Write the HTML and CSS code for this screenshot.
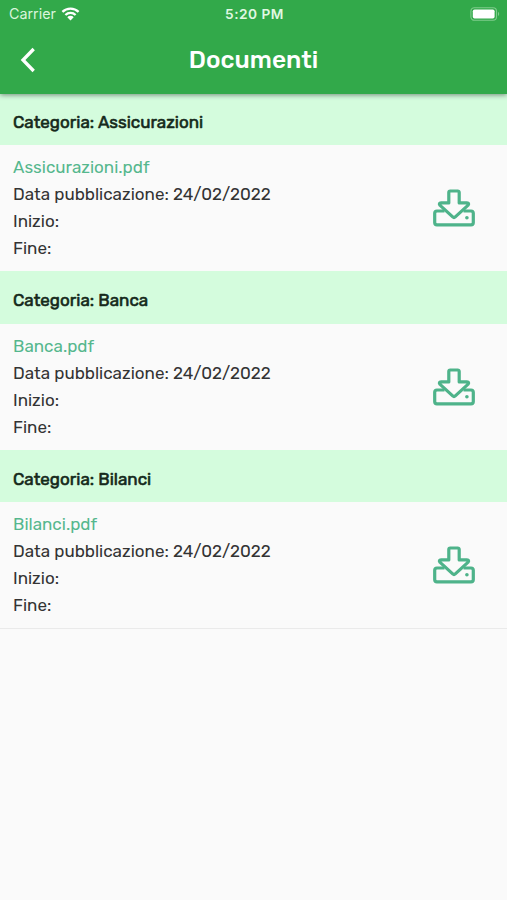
FILE: index.html
```
<!DOCTYPE html>
<html lang="it">
<head>
<meta charset="utf-8">
<meta name="viewport" content="width=device-width, initial-scale=1">
<title>Documenti</title>
<link rel="stylesheet" href="styles.css">
</head>
<body>
<svg class="defs" width="0" height="0" aria-hidden="true">
  <symbol id="download" viewBox="0 0 42 38">
    <path d="M11.500 22H4A2.300 2.300 0 0 0 1.700 24.300v9.300A2.300 2.300 0 0 0 4 35.900h34a2.300 2.300 0 0 0 2.300-2.300v-9.300a2.300 2.300 0 0 0-2.300-2.300h-7.500" fill="none" stroke="currentColor" stroke-width="3.200"/>
    <path d="M17.300 2h7.400a1.500 1.500 0 0 1 1.500 1.500v10.400h7.600q3 .3 1.100 2.500L22.300 27.900q-1.300 1.200-2.600 0L7.100 16.400q-1.900-2.200 1.100-2.500h7.600V3.500a1.500 1.500 0 0 1 1.500-1.500z" fill="none" stroke="currentColor" stroke-width="3.200" stroke-linejoin="round"/>
    <circle cx="33.900" cy="28.800" r="1.800" fill="currentColor"/>
  </symbol>
</svg>
<header class="header">
  <div class="status">
    <div class="carrier"><span>Carrier</span>
      <svg class="wifi" viewBox="0 0 18 14" aria-hidden="true">
        <path d="M.9 4.900a11.500 11.500 0 0 1 16.200 0M3.900 8a7.300 7.300 0 0 1 10.200 0" fill="none" stroke="#fff" stroke-width="2.300"/>
        <path d="M5.800 10.200a4.500 4.500 0 0 1 6.400 0L9 13.400z" fill="#fff"/>
      </svg>
    </div>
    <span class="clock">5:20 PM</span>
    <svg class="battery" viewBox="0 0 30 14" aria-hidden="true">
      <rect x=".9" y=".7" width="25.600" height="12.600" rx="3.500" fill="none" stroke="#7fcb8c" stroke-width="1.100"/>
      <rect x="2.800" y="2.500" width="21.800" height="9" rx="1.800" fill="#fff"/>
      <path d="M28 4.800q2.400 2.200 0 4.400z" fill="#7fcb8c"/>
    </svg>
  </div>
  <div class="toolbar">
    <svg class="back" viewBox="0 0 16 26" aria-hidden="true"><path d="M13.700 2 3 13l10.700 11" fill="none" stroke="#fff" stroke-width="3.300"/></svg>
    <h1 class="title">Documenti</h1>
  </div>
</header>
<main>
  <section class="group">
    <h2 class="category">Categoria: Assicurazioni</h2>
    <div class="document">
      <div class="details">
        <div class="file">Assicurazioni.pdf</div>
        <div>Data pubblicazione: 24/02/2022</div>
        <div>Inizio:</div>
        <div>Fine:</div>
      </div>
      <svg class="download"><use href="#download"/></svg>
    </div>
  </section>
  <section class="group">
    <h2 class="category">Categoria: Banca</h2>
    <div class="document">
      <div class="details">
        <div class="file">Banca.pdf</div>
        <div>Data pubblicazione: 24/02/2022</div>
        <div>Inizio:</div>
        <div>Fine:</div>
      </div>
      <svg class="download"><use href="#download"/></svg>
    </div>
  </section>
  <section class="group">
    <h2 class="category">Categoria: Bilanci</h2>
    <div class="document">
      <div class="details">
        <div class="file">Bilanci.pdf</div>
        <div>Data pubblicazione: 24/02/2022</div>
        <div>Inizio:</div>
        <div>Fine:</div>
      </div>
      <svg class="download"><use href="#download"/></svg>
    </div>
  </section>
</main>
</body>
</html>
```
FILE: styles.css
```
* { box-sizing: border-box; }
body {
  margin: 0;
  min-height: 900px;
  background: #fafafa;
  color: #333;
  font-family: Rubik, Roboto, sans-serif;
}
.defs { display: block; }
.header {
  position: relative;
  height: 94px;
  margin-bottom: -1.100px;
  background: #32a94a;
  color: #fff;
  box-shadow: 0 1px 5px rgba(0, 0, 0, .45);
}
.status {
  display: grid;
  grid-template-columns: 1fr auto 1fr;
  align-items: center;
  height: 27px;
  padding: 0 7px 0 9px;
}
.carrier {
  display: flex;
  align-items: center;
  gap: 5px;
  font: 400 14.300px Inter, sans-serif;
  color: #d9f5dc;
}
.wifi { width: 19px; height: 14px; }
.clock {
  font: 600 13.700px Inter, sans-serif;
  letter-spacing: .5px;
  color: #e0f8e3;
}
.battery { width: 30px; height: 14px; justify-self: end; }
.toolbar {
  display: grid;
  grid-template-columns: 1fr auto 1fr;
  align-items: center;
  height: 66px;
  padding: 0 20px;
}
.back { width: 16px; height: 26px; }
.title {
  margin: -1px 0 0;
  font-size: 24.500px;
  font-weight: 500;
}
.category {
  height: 52.200px;
  margin: 0;
  padding: 6px 13px 0;
  background: #d4fcdd;
  color: #15291b;
  font-size: 17.050px;
  font-weight: 400;
  line-height: 46px;
  -webkit-text-stroke: .6px #15291b;
}
.document {
  display: flex;
  justify-content: space-between;
  height: 126.300px;
  padding: 9px 32px 0 13px;
}
.group:last-child .document {
  height: 127px;
  border-bottom: 1px solid #eaeaea;
}
.details {
  font-size: 17.050px;
  line-height: 27px;
}
.file { color: #55b78d; }
.download {
  width: 42px;
  height: 38px;
  margin-top: 35px;
  color: #4eb38a;
}
```
